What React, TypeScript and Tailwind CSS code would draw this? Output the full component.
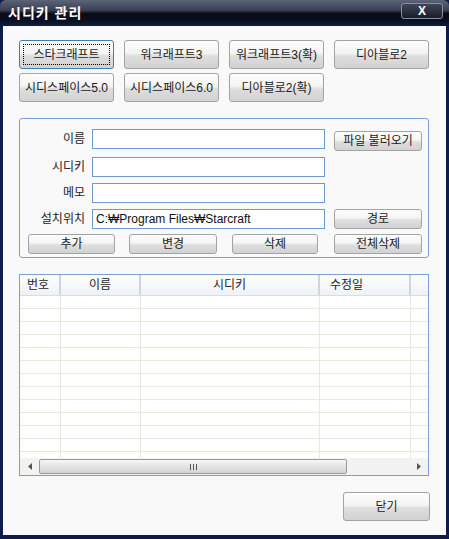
import React from "react";

const font = { fontFamily: '"Liberation Sans", "Noto Sans CJK KR", sans-serif' };

const Btn = ({
  label,
  className = "",
  focused = false,
}: {
  label: string;
  className?: string;
  focused?: boolean;
}) => (
  <div
    className={`relative flex items-center justify-center rounded-[3px] border text-[12px] text-[#1a1a1a] bg-[linear-gradient(#fdfdfd_0%,#f4f4f4_45%,#dedede_55%,#d2d2d2_100%)] ${
      focused ? "border-[#3c7fb1]" : "border-[#a3a3a3]"
    } ${className}`}
  >
    {focused && (
      <div className="absolute inset-[3px] border border-dotted border-black" />
    )}
    <span className="leading-none">{label}</span>
  </div>
);

const Field = ({ label, value = "" }: { label: string; value?: string }) => (
  <div className="flex items-center h-[20px]">
    <div className="w-[65px] text-right text-[12px] text-[#222]">{label}</div>
    <div className="ml-[7px] w-[233px] h-[20px] border border-[#6f9ad1] bg-white flex items-center px-[3px] text-[12px] text-[#111]">
      {value}
    </div>
  </div>
);

const topButtons = [
  "스타크래프트",
  "워크래프트3",
  "워크래프트3(확)",
  "디아블로2",
  "시디스페이스5.0",
  "시디스페이스6.0",
  "디아블로2(확)",
];

const rows = Array.from({ length: 13 });

export default function App() {
  return (
    <div
      className="w-[449px] h-[539px] bg-[#0e1c4a] flex flex-col"
      style={font}
    >
      {/* title bar */}
      <div className="h-[26px] flex items-center justify-between rounded-t-[6px] bg-[linear-gradient(#5d6478_0%,#3a3f52_40%,#0b0c12_52%,#0b0f22_80%,#0e1c4a_100%)] pl-[8px] pr-[6px]">
        <span className="text-white font-bold text-[14px] tracking-[1px]">시디키 관리</span>
        <div className="w-[42px] h-[16px] mb-[4px] rounded-[3px] border border-[#8a8e9c] bg-[linear-gradient(#40465a,#1a1d2a)] flex items-center justify-center">
          <span className="text-white font-bold text-[12px] leading-none">X</span>
        </div>
      </div>

      {/* client area */}
      <div className="mx-[3px] h-[509px] bg-[#f9f9f9] pl-[16px] pt-[14px]">
        <div className="grid grid-cols-[95px_95px_95px_95px] gap-x-[10px] gap-y-[4px]">
          {topButtons.map((b, i) => (
            <Btn key={b} label={b} focused={i === 0} className="h-[29px]" />
          ))}
        </div>

        {/* group box */}
        <div className="mt-[16px] w-[410px] h-[140px] rounded-[3px] border border-[#7b9fd4] pt-[8px]">
          <div className="flex flex-col gap-[6px]">
            <div className="flex items-center">
              <Field label="이름" />
              <Btn label="파일 불러오기" className="ml-[9px] w-[88px] h-[20px] mt-[4px]" />
            </div>
            <Field label="시디키" />
            <Field label="메모" />
            <div className="flex items-center">
              <Field label="설치위치" value="C:₩Program Files₩Starcraft" />
              <Btn label="경로" className="ml-[9px] w-[88px] h-[20px]" />
            </div>
          </div>
          <div className="flex mt-[5px] pl-[8px]">
            <Btn label="추가" className="w-[87px] h-[20px]" />
            <Btn label="변경" className="ml-[14px] w-[88px] h-[20px]" />
            <Btn label="삭제" className="ml-[15px] w-[86px] h-[20px]" />
            <Btn label="전체삭제" className="ml-[16px] w-[88px] h-[20px]" />
          </div>
        </div>

        {/* list */}
        <div className="mt-[16px] w-[410px] h-[202px] border border-[#7b9fd4] bg-white flex flex-col overflow-hidden">
          <div className="h-[21px] flex text-[12px] text-[#222] bg-[linear-gradient(#ffffff,#eef1f5)] border-b border-[#d6dde8]">
            <div className="w-[41px] pl-[7px] flex items-center border-r-2 border-[#c9d6e8]">번호</div>
            <div className="w-[80px] flex items-center justify-center border-r-2 border-[#c9d6e8]">이름</div>
            <div className="w-[179px] flex items-center justify-center border-r-2 border-[#c9d6e8]">시디키</div>
            <div className="w-[91px] pl-[10px] flex items-center border-r-2 border-[#c9d6e8]">수정일</div>
            <div className="flex-1" />
          </div>
          <div className="flex-1 overflow-hidden">
            {rows.map((_, i) => (
              <div key={i} className="h-[13px] flex border-b border-[#ece9d8]">
                <div className="w-[41px] border-r border-[#ece9d8]" />
                <div className="w-[80px] border-r border-[#ece9d8]" />
                <div className="w-[179px] border-r border-[#ece9d8]" />
                <div className="w-[91px] border-r border-[#ece9d8]" />
                <div className="flex-1" />
              </div>
            ))}
          </div>
          {/* scrollbar */}
          <div className="h-[17px] flex items-center bg-[#f2f2f2]">
            <div className="w-[19px] flex justify-center">
              <svg width="4" height="7" viewBox="0 0 4 7">
                <path d="M4 0 L0 3.5 L4 7 Z" fill="#555" />
              </svg>
            </div>
            <div className="w-[308px] h-[15px] rounded-[2px] border border-[#9a9a9a] bg-[linear-gradient(#f6f6f6,#e4e4e4_50%,#d2d2d2)] flex items-center justify-center gap-[2px]">
              <div className="w-px h-[6px] bg-[#555]" />
              <div className="w-px h-[6px] bg-[#555]" />
              <div className="w-px h-[6px] bg-[#555]" />
            </div>
            <div className="flex-1" />
            <div className="w-[19px] flex justify-center">
              <svg width="4" height="7" viewBox="0 0 4 7">
                <path d="M0 0 L4 3.5 L0 7 Z" fill="#555" />
              </svg>
            </div>
          </div>
        </div>

        <div className="flex justify-end pr-[16px] mt-[16px]">
          <Btn label="닫기" className="w-[87px] h-[29px]" />
        </div>
      </div>
    </div>
  );
}
